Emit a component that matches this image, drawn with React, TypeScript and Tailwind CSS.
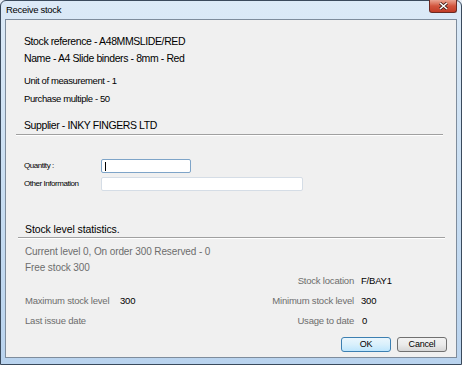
import React from 'react';

const Sep = () => (
  <div className="border-t border-[#a0a0a0] border-b border-b-white" />
);

const StatLabel = ({ children }: { children?: React.ReactNode }) => (
  <div className="h-[20px] leading-[20px] text-[#6d6d6d]">{children}</div>
);

const StatValue = ({ children }: { children?: React.ReactNode }) => (
  <div className="h-[20px] leading-[20px] text-black">{children}</div>
);

const App = () => {
  return (
    <div className="w-[462px] h-[365px] bg-[#e8eef6] font-['Liberation_Sans',Arial,sans-serif]">
      <div className="relative w-full h-full border border-[#3a4a5c] rounded-t-[6px] bg-gradient-to-b from-[#dceaf7] via-[#c9def2] to-[#b9d3ee] flex flex-col">
        {/* title bar */}
        <div className="h-[18px] flex items-center pl-[5px] text-[9.5px] tracking-[-0.3px] text-black">
          Receive stock
        </div>
        <div className="absolute right-[4px] -top-px w-[28px] h-[13px] rounded-b-[3px] border border-[#6b2a22] border-t-0 bg-gradient-to-b from-[#e9a492] via-[#d2553e] to-[#c23c26] flex items-center justify-center">
          <svg width="9" height="8" viewBox="0 0 9 8">
            <path d="M1 1 L8 7 M8 1 L1 7" stroke="#3a1a14" strokeWidth="3" />
            <path d="M1 1 L8 7 M8 1 L1 7" stroke="white" strokeWidth="1.6" />
          </svg>
        </div>
        {/* client area */}
        <div className="flex-1 mx-[4px] mb-[6px] border border-[#7e8c9c] bg-[#f0f0f0] flex flex-col text-black">
          <div className="pl-[18px] pt-[13px] flex flex-col text-[10.5px] tracking-[-0.4px]">
            <div className="h-[16px] leading-[16px]">Stock reference - A48MMSLIDE/RED</div>
            <div className="h-[16px] leading-[16px] mt-[1px]">Name - A4 Slide binders - 8mm - Red</div>
            <div className="h-[16px] leading-[16px] mt-[7px] text-[9.5px]">Unit of measurement - 1</div>
            <div className="h-[16px] leading-[16px] mt-[2px] text-[9.5px]">Purchase multiple - 50</div>
            <div className="h-[16px] leading-[16px] mt-[10px]">Supplier - INKY FINGERS LTD</div>
          </div>
          <div className="ml-[10px] mr-[13px] mt-[1px]">
            <Sep />
          </div>
          <div className="pl-[18px] pt-[23px] flex flex-col gap-[4px] text-[8px] tracking-[-0.45px]">
            <div className="flex items-center">
              <span className="w-[77px]">Quantity :</span>
              <div className="w-[90px] h-[14px] bg-white border border-[#7ea4c8] rounded-[2px] flex items-center pl-[3px]">
                <div className="w-px h-[9px] bg-black" />
              </div>
            </div>
            <div className="flex items-center">
              <span className="w-[77px]">Other Information</span>
              <div className="w-[202px] h-[14px] bg-white border border-[#d5dde6] rounded-[2px]" />
            </div>
          </div>
          <div className="pl-[19px] mt-[30px] h-[16px] leading-[16px] text-[10.5px] tracking-[-0.1px]">
            Stock level statistics.
          </div>
          <div className="ml-[12px] mr-[11px]">
            <Sep />
          </div>
          <div className="pl-[19px] pt-[5px] text-[10px] tracking-[-0.1px] text-[#6d6d6d] flex flex-col">
            <div className="h-[16px] leading-[16px]">Current level 0, On order 300 Reserved - 0</div>
            <div className="h-[11px] leading-[16px]">Free stock 300</div>
          </div>
          <div className="grid grid-cols-[95px_80px_154px_1fr] text-[9.5px] tracking-[-0.2px] pl-[19px]">
            <div />
            <div />
            <div className="text-right"><StatLabel>Stock location</StatLabel></div>
            <div className="pl-[7px]"><StatValue>F/BAY1</StatValue></div>
            <StatLabel>Maximum stock level</StatLabel>
            <StatValue>300</StatValue>
            <div className="text-right"><StatLabel>Minimum stock level</StatLabel></div>
            <div className="pl-[7px]"><StatValue>300</StatValue></div>
            <StatLabel>Last issue date</StatLabel>
            <div />
            <div className="text-right"><StatLabel>Usage to date</StatLabel></div>
            <div className="pl-[8px]"><StatValue>0</StatValue></div>
          </div>
          <div className="flex justify-end gap-[6px] pr-[9px] mt-[6px] text-[9px] tracking-[-0.2px]">
            <button className="w-[50px] h-[15px] rounded-[3px] border border-[#3c7fb1] bg-gradient-to-b from-[#eaf6fd] via-[#d9f0fc] to-[#bee6fd] leading-none">OK</button>
            <button className="w-[50px] h-[15px] rounded-[3px] border border-[#707070] bg-gradient-to-b from-[#f2f2f2] via-[#ebebeb] to-[#d6d6d6] leading-none">Cancel</button>
          </div>
        </div>
      </div>
    </div>
  );
};

export default App;
